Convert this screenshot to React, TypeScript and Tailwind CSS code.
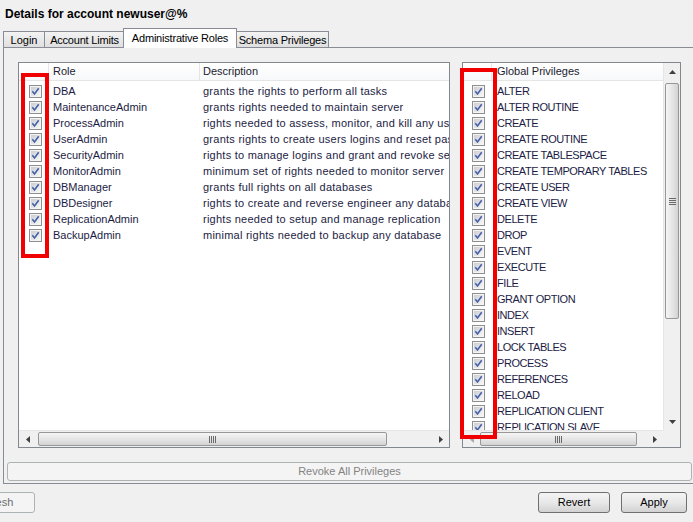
import React from "react";

const roles: [string, string][] = [
  ["DBA", "grants the rights to perform all tasks"],
  ["MaintenanceAdmin", "grants rights needed to maintain server"],
  ["ProcessAdmin", "rights needed to assess, monitor, and kill any user"],
  ["UserAdmin", "grants rights to create users logins and reset pass"],
  ["SecurityAdmin", "rights to manage logins and grant and revoke se"],
  ["MonitorAdmin", "minimum set of rights needed to monitor server"],
  ["DBManager", "grants full rights on all databases"],
  ["DBDesigner", "rights to create and reverse engineer any databa"],
  ["ReplicationAdmin", "rights needed to setup and manage replication"],
  ["BackupAdmin", "minimal rights needed to backup any database"],
];

const privileges = [
  "ALTER",
  "ALTER ROUTINE",
  "CREATE",
  "CREATE ROUTINE",
  "CREATE TABLESPACE",
  "CREATE TEMPORARY TABLES",
  "CREATE USER",
  "CREATE VIEW",
  "DELETE",
  "DROP",
  "EVENT",
  "EXECUTE",
  "FILE",
  "GRANT OPTION",
  "INDEX",
  "INSERT",
  "LOCK TABLES",
  "PROCESS",
  "REFERENCES",
  "RELOAD",
  "REPLICATION CLIENT",
  "REPLICATION SLAVE",
];

function Check() {
  return (
    <svg width="13" height="13" viewBox="0 0 13 13" className="block shrink-0">
      <defs>
        <linearGradient id="cbg" x1="0" y1="0" x2="1" y2="1">
          <stop offset="0" stopColor="#c9ccd3" />
          <stop offset="1" stopColor="#f8f8f8" />
        </linearGradient>
      </defs>
      <rect x="0.5" y="0.5" width="12" height="12" fill="#f4f4f4" stroke="#8e8f8f" />
      <rect x="2" y="2" width="9" height="9" fill="url(#cbg)" />
      <path d="M3.3 6.3 L5.5 8.9 L9.7 3.3" fill="none" stroke="#4660a8" strokeWidth="1.6" />
    </svg>
  );
}

function Arrow({ dir }: { dir: "up" | "down" | "left" | "right" }) {
  const d =
    dir === "up"
      ? "M0 4 L3.5 0 L7 4 Z"
      : dir === "down"
      ? "M0 0 L7 0 L3.5 4 Z"
      : dir === "left"
      ? "M4 0 L4 7 L0 3.5 Z"
      : "M0 0 L4 3.5 L0 7 Z";
  const w = dir === "up" || dir === "down" ? 7 : 4;
  const h = dir === "up" || dir === "down" ? 4 : 7;
  return (
    <svg width={w} height={h} viewBox={`0 0 ${w} ${h}`} className="block">
      <path d={d} fill="#404040" />
    </svg>
  );
}

function VGrip() {
  return (
    <svg width="7" height="7" viewBox="0 0 7 7" className="block">
      <path d="M0 0.5 H7 M0 2.5 H7 M0 4.5 H7 M0 6.5 H7" stroke="#6a6a6a" strokeWidth="1" />
    </svg>
  );
}

function HGrip() {
  return (
    <svg width="7" height="7" viewBox="0 0 7 7" className="block">
      <path d="M0.5 0 V7 M2.5 0 V7 M4.5 0 V7 M6.5 0 V7" stroke="#6a6a6a" strokeWidth="1" />
    </svg>
  );
}

function LeftHScroll() {
  return (
    <div className="h-[17px] flex bg-[#f0f0f0] border-t border-[#e6e6e6]">
      <div className="w-[17px] flex items-center justify-center">
        <Arrow dir="left" />
      </div>
      <div className="ml-[2px] w-[349px] h-[14px] mt-[1px] rounded-[2px] border border-[#979797] bg-linear-to-b from-[#f5f5f5] via-[#e6e6e6] to-[#d3d3d3] flex items-center justify-center">
        <HGrip />
      </div>
      <div className="flex-1" />
      <div className="w-[17px] flex items-center justify-center">
        <Arrow dir="right" />
      </div>
    </div>
  );
}

function RightHScroll() {
  return (
    <div className="w-[200px] h-[17px] flex bg-[#f0f0f0] border-t border-[#e6e6e6]">
      <div className="w-[17px] flex items-center justify-center opacity-40">
        <Arrow dir="left" />
      </div>
      <div className="w-[157px] h-[14px] mt-[1px] rounded-[2px] border border-[#979797] bg-linear-to-b from-[#f5f5f5] via-[#e6e6e6] to-[#d3d3d3] flex items-center justify-center">
        <HGrip />
      </div>
      <div className="flex-1" />
      <div className="w-[17px] flex items-center justify-center">
        <Arrow dir="right" />
      </div>
    </div>
  );
}

function RightVScroll() {
  return (
    <div className="w-[17px] flex flex-col bg-[#f0f0f0] border-l border-[#e6e6e6]">
      <div className="h-[17px] flex items-center justify-center">
        <Arrow dir="up" />
      </div>
      <div className="mt-[3px] ml-[1px] w-[14px] h-[236px] rounded-[2px] border border-[#979797] bg-linear-to-r from-[#f5f5f5] via-[#e6e6e6] to-[#d3d3d3] flex items-center justify-center">
        <VGrip />
      </div>
      <div className="flex-1" />
      <div className="h-[17px] flex items-center justify-center">
        <Arrow dir="down" />
      </div>
    </div>
  );
}

function RolesList() {
  return (
    <div className="w-[432px] h-[386px] border border-[#828790] bg-white flex flex-col">
      <div className="flex-1 min-h-0 overflow-hidden">
        <div className="h-[18px] flex border-b border-[#e5e5e5] bg-linear-to-b from-white to-[#f7f8fa] text-[#1c1c30] leading-[17px]">
          <div className="w-[30px] shrink-0 border-r border-[#e5e5e5]" />
          <div className="w-[151px] shrink-0 pl-[4px] border-r border-[#e5e5e5]">Role</div>
          <div className="pl-[3px] whitespace-nowrap">Description</div>
        </div>
        <div className="pt-[2px]">
          {roles.map(([r, d]) => (
            <div key={r} className="h-[16px] flex items-center text-[#1c1c44] whitespace-nowrap">
              <div className="w-[30px] shrink-0 pl-[10px]">
                <Check />
              </div>
              <div className="w-[151px] shrink-0 pl-[4px]">{r}</div>
              <div className="w-[249px] shrink-0 overflow-hidden pl-[3px] tracking-[0.25px]">{d}</div>
            </div>
          ))}
        </div>
      </div>
      <LeftHScroll />
    </div>
  );
}

function PrivList() {
  return (
    <div className="w-[219px] h-[386px] border border-[#828790] bg-white flex flex-col">
      <div className="flex flex-1 min-h-0">
        <div className="w-[200px] overflow-hidden">
          <div className="h-[18px] flex border-b border-[#e5e5e5] bg-linear-to-b from-white to-[#f7f8fa] text-[#1c1c30] leading-[17px]">
            <div className="w-[29px] shrink-0 border-r border-[#e5e5e5]" />
            <div className="pl-[5px] whitespace-nowrap">Global Privileges</div>
          </div>
          <div className="pt-[2px]">
            {privileges.map((p) => (
              <div key={p} className="h-[16px] flex items-center text-[#1c1c44] whitespace-nowrap">
                <div className="w-[29px] shrink-0 pl-[9px]">
                  <Check />
                </div>
                <div className="pl-[5px] tracking-[-0.45px]">{p}</div>
              </div>
            ))}
          </div>
        </div>
        <RightVScroll />
      </div>
      <div className="flex">
        <RightHScroll />
        <div className="w-[17px] h-[17px] bg-[#f0f0f0]" />
      </div>
    </div>
  );
}

export default function App() {
  return (
    <div className="relative w-[693px] h-[522px] overflow-hidden bg-[#f0f0f0] font-['Liberation_Sans',Arial,sans-serif] text-[11px] text-black">
      <div className="h-[28px] pl-[5px] pt-[6px] text-[12px] leading-[16px] font-bold text-black">
        Details for account newuser@%
      </div>

      <div className="h-[19px] flex items-end pl-[3px] whitespace-nowrap">
        <div className="w-[42px] h-[16px] border border-b-0 border-[#898c95] bg-linear-to-b from-[#f3f3f3] to-[#dfdfdf] text-center leading-[16px]">
          Login
        </div>
        <div className="w-[80px] h-[16px] border border-b-0 border-l-0 border-[#898c95] bg-linear-to-b from-[#f3f3f3] to-[#dfdfdf] text-center leading-[16px] tracking-[-0.2px]">
          Account Limits
        </div>
        <div className="relative z-10 -mb-px ml-[-2px] w-[114px] h-[20px] border border-b-0 border-[#898c95] bg-white text-center leading-[19px] tracking-[-0.2px]">
          Administrative Roles
        </div>
        <div className="ml-[-1px] w-[93px] h-[16px] border border-b-0 border-[#898c95] bg-linear-to-b from-[#f3f3f3] to-[#dfdfdf] text-center leading-[16px] tracking-[-0.2px]">
          Schema Privileges
        </div>
      </div>

      <div className="ml-[3px] w-[700px] h-[437px] border border-[#898c95] bg-[#f0f0f0] pt-[14px]">
        <div className="ml-[14px] flex gap-[12px]">
          <RolesList />
          <PrivList />
        </div>
        <div className="mt-[14px] ml-[3px] w-[685px] h-[19px] rounded-[3px] border border-[#adb2b5] bg-[#f4f4f4] flex items-center justify-center text-[#838383]">
          Revoke All Privileges
        </div>
      </div>

      <div className="mt-[8px] flex items-center pr-[6px]">
        <div className="ml-[-47px] w-[82px] h-[21px] rounded-[3px] border border-[#adb2b5] bg-[#f4f4f4] flex items-center justify-center text-[#6d6d6d]">
          Refresh
        </div>
        <div className="flex-1" />
        <div className="w-[72px] h-[21px] rounded-[3px] border border-[#707070] bg-linear-to-b from-[#f4f4f4] via-[#e8e8e8] to-[#d2d2d2] flex items-center justify-center text-black">
          Revert
        </div>
        <div className="ml-[11px] w-[66px] h-[21px] rounded-[3px] border border-[#707070] bg-linear-to-b from-[#f4f4f4] via-[#e8e8e8] to-[#d2d2d2] flex items-center justify-center text-black">
          Apply
        </div>
      </div>

      <div className="absolute left-[21px] top-[73px] w-[28px] h-[185px] border-4 border-[#f00000]" />
      <div className="absolute left-[460px] top-[68px] w-[37px] h-[371px] border-4 border-[#f00000]" />
    </div>
  );
}
